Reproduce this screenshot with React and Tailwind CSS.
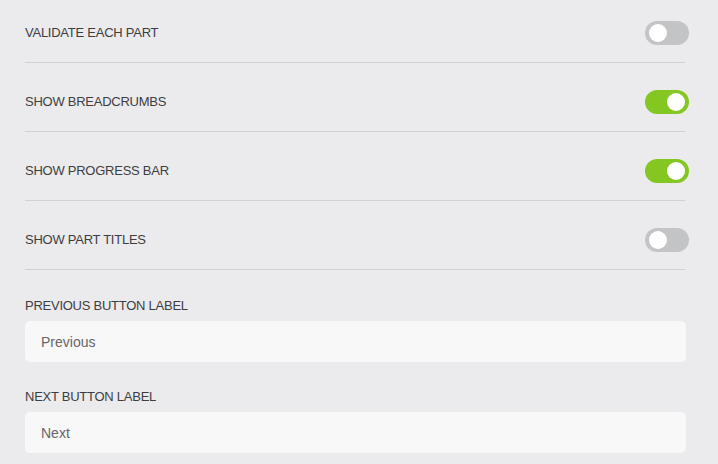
import React, { useState } from 'react';

const Toggle = ({ on, onChange }) => (
  <button
    type="button"
    onClick={onChange}
    className={`relative -mr-1 h-6 w-11 shrink-0 rounded-full ${on ? 'bg-[#84c723]' : 'bg-[#c3c4c6]'}`}
  >
    <span
      className={`absolute top-[3px] h-[18px] w-[18px] rounded-full bg-white ${on ? 'left-[22px]' : 'left-1'}`}
    />
  </button>
);

const ToggleRow = ({ label, on, onChange, first }) => (
  <div className={`flex items-center justify-between border-b border-[#d0d1d3] pb-[17px] ${first ? 'pt-[21px]' : 'pt-[27px]'}`}>
    <span className="text-[13px] tracking-[-0.25px] text-[#3d3d3f]">{label}</span>
    <Toggle on={on} onChange={onChange} />
  </div>
);

const TextField = ({ label, value, onChange }) => (
  <div className="flex flex-col">
    <label className="text-[13px] tracking-[-0.25px] text-[#3d3d3f] leading-[16px]">{label}</label>
    <input
      value={value}
      onChange={e => onChange(e.target.value)}
      className="mt-[7px] h-[41px] rounded-[5px] bg-[#f8f8f8] px-4 text-[14px] text-[#666] outline-none"
    />
  </div>
);

const App = () => {
  const [settings, setSettings] = useState({
    validate: false,
    breadcrumbs: true,
    progress: true,
    titles: false,
  });
  const [prevLabel, setPrevLabel] = useState('Previous');
  const [nextLabel, setNextLabel] = useState('Next');

  const flip = key => setSettings(s => ({ ...s, [key]: !s[key] }));

  return (
    <div className="min-h-screen bg-[#ebebed] pl-[25px] pr-[33px] font-['Liberation_Sans',Arial,sans-serif]">
      <ToggleRow first label="VALIDATE EACH PART" on={settings.validate} onChange={() => flip('validate')} />
      <ToggleRow label="SHOW BREADCRUMBS" on={settings.breadcrumbs} onChange={() => flip('breadcrumbs')} />
      <ToggleRow label="SHOW PROGRESS BAR" on={settings.progress} onChange={() => flip('progress')} />
      <ToggleRow label="SHOW PART TITLES" on={settings.titles} onChange={() => flip('titles')} />

      <div className="-mr-px flex flex-col gap-[27px] pt-[28px]">
        <TextField label="PREVIOUS BUTTON LABEL" value={prevLabel} onChange={setPrevLabel} />
        <TextField label="NEXT BUTTON LABEL" value={nextLabel} onChange={setNextLabel} />
      </div>
    </div>
  );
};

export default App;
